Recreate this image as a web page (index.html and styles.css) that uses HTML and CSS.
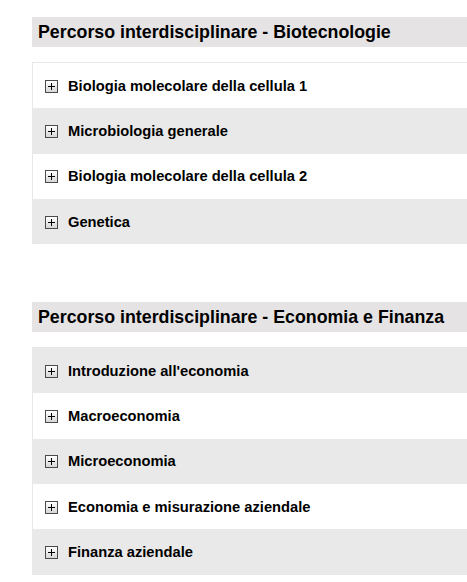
FILE: index.html
```html
<!DOCTYPE html>
<html lang="it">
<head>
<meta charset="utf-8">
<title>Percorsi interdisciplinari</title>
<link rel="stylesheet" href="styles.css">
</head>
<body>
<div class="page">
  <section class="block">
    <h2 class="title">Percorso interdisciplinare - Biotecnologie</h2>
    <ul class="list">
      <li class="row"><span class="toggle"></span><span class="label">Biologia molecolare della cellula 1</span></li>
      <li class="row alt"><span class="toggle"></span><span class="label">Microbiologia generale</span></li>
      <li class="row"><span class="toggle"></span><span class="label">Biologia molecolare della cellula 2</span></li>
      <li class="row alt"><span class="toggle"></span><span class="label">Genetica</span></li>
    </ul>
  </section>
  <section class="block">
    <h2 class="title">Percorso interdisciplinare - Economia e Finanza</h2>
    <ul class="list">
      <li class="row alt"><span class="toggle"></span><span class="label">Introduzione all'economia</span></li>
      <li class="row"><span class="toggle"></span><span class="label">Macroeconomia</span></li>
      <li class="row alt"><span class="toggle"></span><span class="label">Microeconomia</span></li>
      <li class="row"><span class="toggle"></span><span class="label">Economia e misurazione aziendale</span></li>
      <li class="row alt"><span class="toggle"></span><span class="label">Finanza aziendale</span></li>
    </ul>
  </section>
</div>
</body>
</html>
```
FILE: styles.css
```css
html, body {
  margin: 0;
  padding: 0;
  background: #ffffff;
  overflow: hidden;
}
body {
  font-family: "Liberation Sans", Arial, sans-serif;
  color: #000;
}
.page {
  padding: 17px 0 0 32px;
}
.block {
  margin: 0 0 58px 0;
}
.block:last-child {
  margin-bottom: 0;
}
.title {
  margin: 0 0 15px 0;
  height: 30px;
  line-height: 31px;
  padding-left: 6px;
  background: #e5e3e3;
  font-size: 17.8px;
  font-weight: bold;
  white-space: nowrap;
}
.list {
  list-style: none;
  margin: 0;
  padding: 0;
  border-top: 1px solid #e8e8e8;
  border-left: 1px solid #e8e8e8;
}
.row {
  height: 45.3px;
  display: flex;
  align-items: center;
  padding-left: 12px;
  padding-top: 1px;
  box-sizing: border-box;
  background: #ffffff;
}
.row.alt {
  background: #e9e9e9;
}
.toggle {
  box-sizing: border-box;
  width: 13px;
  height: 13px;
  border: 1px solid #4a4a4a;
  background: linear-gradient(#ffffff, #d6d6d6);
  position: relative;
  margin-right: 10px;
  flex: none;
}
.toggle::before,
.toggle::after {
  content: "";
  position: absolute;
  background: #000;
}
.toggle::before {
  left: 2px;
  top: 5px;
  width: 7px;
  height: 1px;
}
.toggle::after {
  left: 5px;
  top: 2px;
  width: 1px;
  height: 7px;
}
.label {
  font-size: 14.7px;
  font-weight: bold;
  line-height: 17px;
  white-space: nowrap;
}
```
